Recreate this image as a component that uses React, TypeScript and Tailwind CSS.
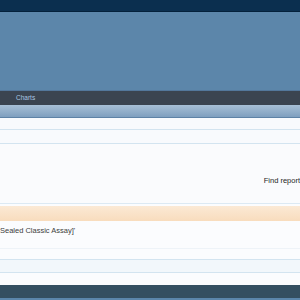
import React from 'react';

const App: React.FC = () => {
  return (
    <div className="w-[300px] h-[300px] overflow-hidden bg-[#fafbfd] flex flex-col font-['Liberation_Sans',Arial,sans-serif]">
      {/* top bar */}
      <div className="h-[12px] shrink-0 bg-[#0b2f4f] border-b border-[#04213b]" />
      {/* banner */}
      <div className="h-[78px] shrink-0 bg-[#5c86aa]" />
      {/* nav */}
      <div className="h-[15px] shrink-0 bg-[#3b4450] border-t border-[#53779b] flex items-center px-[16px]">
        <span className="text-[6.5px] leading-none text-[#a9c6e3]">Charts</span>
      </div>
      {/* section header */}
      <div className="h-[13px] shrink-0 bg-gradient-to-b from-[#a8c0d6] to-[#7f9fbf] border-b border-[#5e82a6]" />
      <div className="h-[12px] shrink-0 bg-[#f8fafd] border-b border-[#d3e4f0]" />
      <div className="h-[14px] shrink-0 bg-[#f8fafd] border-b border-[#d3e4f0]" />
      <div className="h-[60px] shrink-0 bg-[#fafbfd] border-b border-[#dce9f3] flex items-end justify-end pb-[19px]">
        <span className="text-[7.5px] leading-none text-[#1f1f1f] whitespace-nowrap">Find report</span>
      </div>
      <div className="h-[2px] shrink-0 bg-[#fbfcfe]" />
      <div className="h-[15px] shrink-0 bg-gradient-to-b from-[#fbe9d5] to-[#f8dcbd]" />
      <div className="h-[28px] shrink-0 bg-[#fbfcfe] border-b border-[#eef3f8] pt-[6px]">
        <span className="block text-[7.5px] leading-none text-[#3c3c3c] whitespace-nowrap">Sealed Classic Assay]'</span>
      </div>
      <div className="h-[11px] shrink-0 bg-[#fbfcfe] border-b border-[#d3e4f0]" />
      <div className="h-[13px] shrink-0 bg-[#f2f7fb] border-b border-[#d3e4f0]" />
      <div className="h-[12px] shrink-0 bg-[#fbfcfe]" />
      <div className="h-[13px] shrink-0 bg-[#344f61]" />
      <div className="flex-1 bg-[#5b86ab]" />
    </div>
  );
};

export default App;
